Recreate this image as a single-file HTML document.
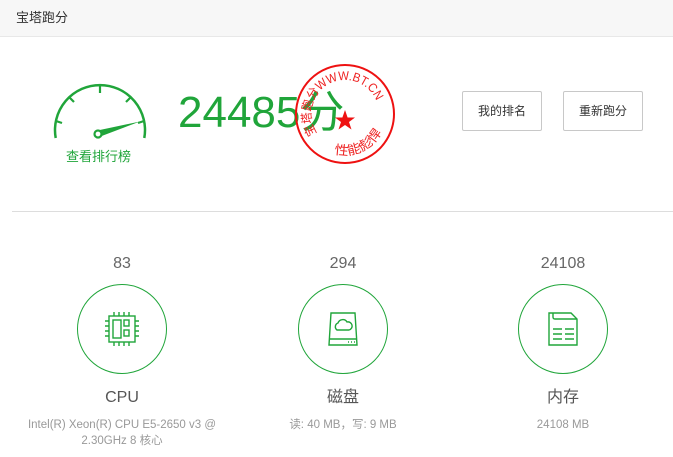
<!DOCTYPE html>
<html><head><meta charset="utf-8"><style>
*{margin:0;padding:0;box-sizing:border-box}
body{width:673px;height:457px;background:#fff;font-family:"Liberation Sans","Noto Sans CJK SC",sans-serif;position:relative;overflow:hidden}
.hd{position:absolute;left:0;top:0;width:673px;height:37px;background:#f7f7f7;border-bottom:1px solid #e8e8e8;font-size:13px;color:#333;line-height:36px;padding-left:16px}
.abs{position:absolute}
.btn{position:absolute;top:91px;width:80px;height:40px;border:1px solid #c8c8c8;border-radius:2px;font-size:12px;color:#333;text-align:center;line-height:38px;background:#fff}
.hr{position:absolute;left:12px;top:211px;width:661px;height:1px;background:#ddd}
.col{position:absolute;top:254px;width:220px;text-align:center}
.num{font-size:16px;color:#666;height:20px;line-height:20px}
.circ{width:90px;height:90px;border:1px solid #20a53a;border-radius:50%;margin:10px auto 0;display:flex;align-items:center;justify-content:center}
.lbl{font-size:16px;color:#555;margin-top:13px;line-height:22px}
.det{font-size:11.5px;color:#999;margin-top:8px;line-height:16px}
</style></head><body>
<div class="hd">宝塔跑分</div>
<svg class="abs" style="left:40px;top:70px" width="120" height="80" viewBox="40 70 120 80">
<path d="M55.7 138 A45 45 0 1 1 144.3 138" fill="none" stroke="#20a53a" stroke-width="2.5"/>
<g stroke="#20a53a" stroke-width="2.2">
<line x1="100" y1="86" x2="100" y2="93"/>
<line x1="69" y1="97" x2="74" y2="102"/>
<line x1="131" y1="97" x2="126" y2="102"/>
<line x1="56" y1="121" x2="62" y2="123"/>
<line x1="144" y1="121" x2="138" y2="123"/>
</g>
<path d="M95 131 L140 121.5 L99 137 Z" fill="#20a53a"/>
<circle cx="98" cy="134" r="3.5" fill="#fff" stroke="#20a53a" stroke-width="2.2"/>
</svg>
<div class="abs" style="left:66px;top:146px;font-size:13px;color:#20a53a">查看排行榜</div>
<div class="abs" style="left:178px;top:88px;font-size:44px;color:#20a53a;line-height:50px">24485分</div>
<svg class="abs" style="left:290px;top:60px" width="110" height="110" viewBox="290 60 110 110">
<circle cx="345" cy="114" r="49" fill="none" stroke="#ee1111" stroke-width="2"/>
<defs>
<path id="top" d="M317.1 133.5 A34 34 0 1 1 376.9 102.4"/>
<path id="bot" d="M334.4 153.6 A41 41 0 0 0 383.5 128"/>
</defs>
<text font-size="12.5" fill="#ee2222" font-family="Liberation Sans,Noto Sans CJK SC,sans-serif"><textPath href="#top" textLength="114" lengthAdjust="spacingAndGlyphs">宝塔跑分WWW.BT.CN</textPath></text>
<text font-size="13" fill="#ee2222" font-family="Noto Sans CJK SC,sans-serif"><textPath href="#bot" textLength="56" lengthAdjust="spacingAndGlyphs">性能彪悍</textPath></text>
<polygon points="345,110 347.6,117.5 355,117.5 349,122 351.5,129.5 345,125 338.5,129.5 341,122 335,117.5 342.4,117.5" fill="#ee1111"/>
</svg>
<div class="btn" style="left:462px">我的排名</div>
<div class="btn" style="left:563px">重新跑分</div>
<div class="hr"></div>
<div class="col" style="left:12px"><div class="num">83</div><div class="circ">
<svg width="36" height="36" viewBox="0 0 36 36" fill="none" stroke="#20a53a" stroke-width="1.4">
<rect x="5" y="5" width="26" height="26"/><rect x="9" y="9" width="8" height="18"/><rect x="20" y="9" width="5" height="6"/><rect x="20" y="19" width="5" height="6"/>
<path d="M10 1v4M15 1v4M20 1v4M25 1v4M10 31v4M15 31v4M20 31v4M25 31v4M1 10h4M1 15h4M1 20h4M1 25h4M31 10h4M31 15h4M31 20h4M31 25h4"/>
</svg></div><div class="lbl">CPU</div><div class="det">Intel(R) Xeon(R) CPU E5-2650 v3 @<br>2.30GHz 8 核心</div></div>
<div class="col" style="left:233px"><div class="num">294</div><div class="circ">
<svg width="32" height="34" viewBox="0 0 32 34" fill="none" stroke="#20a53a" stroke-width="1.4">
<path d="M4 1h24l2 32H2z"/><path d="M2 27h28"/><path d="M10 18a4 4 0 0 1 1-7 5 5 0 0 1 9-1 4 4 0 0 1 2 8z"/><path d="M21 30h1M24 30h1M27 30h1"/>
</svg></div><div class="lbl">磁盘</div><div class="det">读: 40 MB，写: 9 MB</div></div>
<div class="col" style="left:453px"><div class="num">24108</div><div class="circ">
<svg width="32" height="34" viewBox="0 0 32 34" fill="none" stroke="#20a53a" stroke-width="1.4">
<path d="M2 1h22l6 6v26H2z"/><path d="M6 1v4q0 2 2 2h22"/><path d="M6 17h9M18 17h9M6 22h9M18 22h9M6 27h9M18 27h9"/>
</svg></div><div class="lbl">内存</div><div class="det">24108 MB</div></div>
</body></html>
